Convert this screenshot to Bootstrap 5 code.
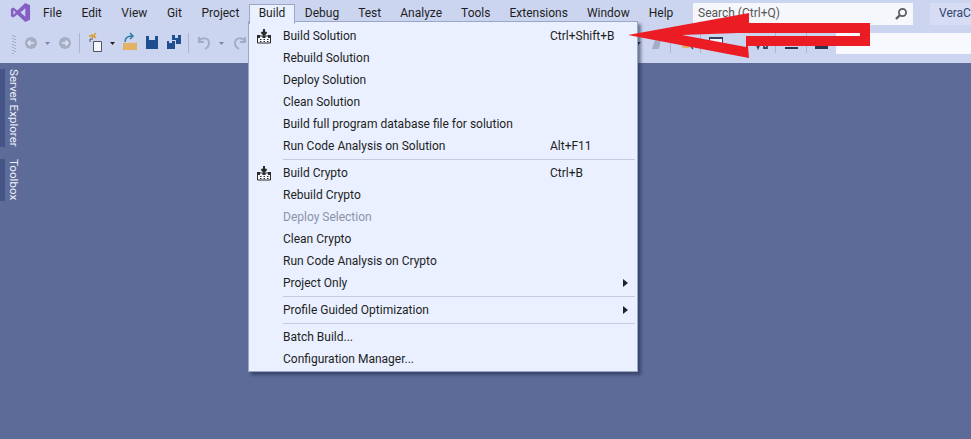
<!DOCTYPE html>
<html lang="en"><head><meta charset="utf-8"><title>Build menu</title>
<link rel="stylesheet" href="https://cdn.jsdelivr.net/npm/bootstrap@5.3.0/dist/css/bootstrap.min.css">
<style>
html,body{height:100%;overflow:hidden}
body{width:971px;height:439px;background:#5d6b99;font-family:Roboto,"Noto Sans",sans-serif;font-size:12px;color:#1e1e1e;position:relative}
.vs-top{height:63px;background:#ccd5f0}
.vs-menubar{height:26px;padding-top:1px}
.vs-logo{width:33.200px;padding-left:10px;padding-top:1px;flex:none}
.vs-mi{padding:0 9.500px;height:21px;line-height:21px;margin-top:2px;white-space:nowrap}
.vs-mi.vs-left{padding:0 9.800px}
.vs-mi.vs-open{background:#eaf0ff;border:1px solid #9ba7c6;border-bottom:0;padding:0 9px 0 8.500px;height:20px;line-height:17px;margin-top:3px;position:relative;z-index:5}
.vs-search{width:220px;height:22px;margin-left:auto;margin-top:2px;background:#f5f7fd;padding:0 5px;color:#555;line-height:21px;flex:none}
.vs-project{width:41px;height:22px;margin-left:17px;margin-top:2px;background:#d5dcf4;padding:0 0 0 9px;line-height:21px;color:#33466e;white-space:nowrap;flex:none}
.vs-project span{display:block;width:32px;overflow:hidden}
.vs-toolbar{height:37px}
.vs-tinput{width:135px;height:21px;background:#f7f9fe;margin-top:7px;margin-left:auto}
.vs-sidebar{width:21px;padding-top:6px}
.vs-tab{writing-mode:vertical-rl;color:#eef1fb;background:linear-gradient(90deg,#465587 0 5px,transparent 5px);padding-left:9px;width:21px;line-height:15px;white-space:nowrap;font-size:11.600px}
.vs-tab1{height:78px;margin-bottom:12px}
.vs-tab2{height:42px}
.vs-menu{position:absolute;left:248px;top:21px;width:390px;height:351px;background:#eaf0ff;border:1px solid #9ba7c6;box-shadow:3px 3px 3px rgba(30,38,70,.55);padding-top:3px;z-index:4}
.vs-row{height:22px;line-height:21px;display:flex;align-items:center;white-space:nowrap}
.vs-ic{width:34px;flex:none;display:flex;justify-content:center;padding-right:5px}
.vs-label{flex:1}
.vs-key{width:73px;flex:none}
.vs-sub{width:14px;flex:none}
.vs-off{color:#8b93a8}
.vs-line{height:1px;background:#c4cbe0;margin:2px 2px 2px 34px}
.vs-arrow{position:absolute;left:625px;top:10px;z-index:8}
</style></head><body>
<div class="vs-top">
 <div class="vs-menubar d-flex">
  <div class="vs-logo"><svg width="21" height="21" viewBox="0 0 22 22"><path d="M16 1l5 2.300v15.400L16 21 7.600 13.200 3.600 16.300 1 15V7l2.600-1.300 4 3.100z" fill="#865fc5"/><path d="M16 6.500 11 11l5 4.500zM3.600 8.500v5L6 11z" fill="#ccd5f0"/></svg></div>
  <div class="vs-mi vs-left">File</div><div class="vs-mi vs-left">Edit</div><div class="vs-mi vs-left">View</div><div class="vs-mi vs-left">Git</div><div class="vs-mi vs-left">Project</div>
  <div class="vs-mi vs-open">Build</div>
  <div class="vs-mi">Debug</div><div class="vs-mi">Test</div><div class="vs-mi">Analyze</div><div class="vs-mi">Tools</div><div class="vs-mi">Extensions</div><div class="vs-mi">Window</div><div class="vs-mi">Help</div>
  <div class="vs-search d-flex justify-content-between"><span>Search (Ctrl+Q)</span><svg class="mt-1" width="14" height="14" viewBox="0 0 14 14"><circle cx="8.500" cy="5.500" r="3.600" fill="none" stroke="#5c5c5c" stroke-width="1.800"/><path d="M6 8 2 12" stroke="#5c5c5c" stroke-width="2.400"/></svg></div>
  <div class="vs-project"><span>VeraCrypt</span></div>
 </div>
 <div class="vs-toolbar d-flex">
  <svg width="835" height="37" viewBox="0 26 835 37">
   <path d="M13 35v19M15 36v18" stroke="#7c86a4" stroke-dasharray="1 2"/>
   <circle cx="31" cy="43" r="6" fill="#a3adc4"/><path d="M34 43h-6M30.500 40.500 28 43l2.500 2.500" stroke="#dfe4f2" fill="none" stroke-width="1.500"/>
   <path d="M45 42h5l-2.500 3z" fill="#7c859c"/>
   <circle cx="65" cy="43" r="6" fill="#a3adc4"/><path d="M62 43h6M65.500 40.500 68 43l-2.500 2.500" stroke="#dfe4f2" fill="none" stroke-width="1.500"/>
   <path d="M79.500 33v20" stroke="#aab4d2"/>
   <path d="M93.500 41.500h8v10h-8z" fill="#f4f6fc" stroke="#4c5566"/><path d="M90 42v-3h3" fill="none" stroke="#4c5566"/>
   <path d="M92 36v-2M92 38l2-2 2 2M89 36h6M96 33l-2 2" stroke="#d99a24" fill="none" stroke-width="1.300"/>
   <path d="M110 42h5l-2.500 3z" fill="#222"/>
   <path d="M123 43h11l3-1v8h-14z" fill="#e3b264"/><path d="M125 42c0-4 3-6 7-6M130 33l3 3-3 3" stroke="#2e7ca0" fill="none" stroke-width="1.500"/>
   <path d="M146 36h12v13h-12z" fill="#1f4f8f"/><path d="M149 36h6v4h-6z" fill="#ccd5f0"/>
   <path d="M167 41h8v8h-8z" fill="#1f4f8f"/><path d="M172 35h9v9h-5v-4h-4z" fill="#1f4f8f"/><path d="M175 35h3v3h-3zM169 41h3v2h-3z" fill="#ccd5f0"/>
   <path d="M188.500 33v20" stroke="#aab4d2"/>
   <path d="M199 37v5h5M199 42c2-5 10-5 10 1 0 3-2 5-4 6" fill="none" stroke="#a3adc4" stroke-width="2"/>
   <path d="M219 42h5l-2.500 3z" fill="#7c859c"/>
   <path d="M245 37v5h-5M245 42c-2-5-10-5-10 1 0 3 2 5 4 6" fill="none" stroke="#a3adc4" stroke-width="2"/>
   <path d="M635 42h6l-3 3z" fill="#222"/>
   <path d="M652 49l3-9 4 1 2-2-2 10z" fill="#a3adc4"/>
   <path d="M670.500 33v20M700.500 33v20M775.500 33v20M806.500 33v20" stroke="#aab4d2"/>
   <path d="M682 44h7v4h-7z" fill="#e3b264"/><path d="M689 44l4 5" stroke="#4c5566" stroke-width="1.500"/>
   <path d="M709.500 37.500h13v9h-13z" fill="#f4f6fc" stroke="#33405e"/><path d="M709 37h14v2h-14z" fill="#33405e"/>
   <path d="M755 41l3 7 3-7M764 41h3v7h-3z" fill="none" stroke="#3a4660" stroke-width="1.800"/>
   <path d="M785 47h13v2h-13zM788 39h2l3 7h-2zM793 40h5v2h-5z" fill="#2a3550"/>
   <path d="M815 49h13v-6h-5v-3h-2v4h-6zM816 39h5v2h-5z" fill="#2a3550"/>
  </svg>
  <div class="vs-tinput"></div>
 </div>
</div>
<div class="vs-sidebar">
 <div class="vs-tab vs-tab1">Server Explorer</div>
 <div class="vs-tab vs-tab2">Toolbox</div>
</div>
<div class="vs-menu">
 <div class="vs-row"><div class="vs-ic"><svg width="16" height="16" viewBox="0 0 16 16"><path d="M8 1v5M5.500 4 8 7l2.500-3" stroke="#2b2b2b" fill="none" stroke-width="2"/><path d="M1.500 8h13v7h-13z" fill="#f6f8ff" stroke="#2b2b2b"/><path d="M1 7h3v3H1zM6.500 8h3v2h-3zM12 7h3v3h-3z" fill="#2b2b2b"/><path d="M4 11.500h1.500M7.500 11.500H9M11 11.500h1.500M4 13.500h1.500M7.500 13.500H9M11 13.500h1.500" stroke="#2b2b2b"/></svg></div><div class="vs-label">Build Solution</div><div class="vs-key">Ctrl+Shift+B</div><div class="vs-sub"></div></div>
 <div class="vs-row"><div class="vs-ic"></div><div class="vs-label">Rebuild Solution</div></div>
 <div class="vs-row"><div class="vs-ic"></div><div class="vs-label">Deploy Solution</div></div>
 <div class="vs-row"><div class="vs-ic"></div><div class="vs-label">Clean Solution</div></div>
 <div class="vs-row"><div class="vs-ic"></div><div class="vs-label">Build full program database file for solution</div></div>
 <div class="vs-row"><div class="vs-ic"></div><div class="vs-label">Run Code Analysis on Solution</div><div class="vs-key">Alt+F11</div><div class="vs-sub"></div></div>
 <div class="vs-line"></div>
 <div class="vs-row"><div class="vs-ic"><svg width="16" height="16" viewBox="0 0 16 16"><path d="M8 1v5M5.500 4 8 7l2.500-3" stroke="#2b2b2b" fill="none" stroke-width="2"/><path d="M1.500 8h13v7h-13z" fill="#f6f8ff" stroke="#2b2b2b"/><path d="M1 7h3v3H1zM6.500 8h3v2h-3zM12 7h3v3h-3z" fill="#2b2b2b"/><path d="M4 11.500h1.500M7.500 11.500H9M11 11.500h1.500M4 13.500h1.500M7.500 13.500H9M11 13.500h1.500" stroke="#2b2b2b"/></svg></div><div class="vs-label">Build Crypto</div><div class="vs-key">Ctrl+B</div><div class="vs-sub"></div></div>
 <div class="vs-row"><div class="vs-ic"></div><div class="vs-label">Rebuild Crypto</div></div>
 <div class="vs-row"><div class="vs-ic"></div><div class="vs-label vs-off">Deploy Selection</div></div>
 <div class="vs-row"><div class="vs-ic"></div><div class="vs-label">Clean Crypto</div></div>
 <div class="vs-row"><div class="vs-ic"></div><div class="vs-label">Run Code Analysis on Crypto</div></div>
 <div class="vs-row"><div class="vs-ic"></div><div class="vs-label">Project Only</div><div class="vs-sub"><svg width="5" height="8" viewBox="0 0 5 8"><path d="M0 0l5 4-5 4z" fill="#1e2233"/></svg></div></div>
 <div class="vs-line"></div>
 <div class="vs-row"><div class="vs-ic"></div><div class="vs-label">Profile Guided Optimization</div><div class="vs-sub"><svg width="5" height="8" viewBox="0 0 5 8"><path d="M0 0l5 4-5 4z" fill="#1e2233"/></svg></div></div>
 <div class="vs-line"></div>
 <div class="vs-row"><div class="vs-ic"></div><div class="vs-label">Batch Build...</div></div>
 <div class="vs-row"><div class="vs-ic"></div><div class="vs-label">Configuration Manager...</div></div>
</div>
<svg class="vs-arrow" width="250" height="50" viewBox="0 0 250 50"><path fill-rule="evenodd" d="M3 25 124 3V13H245V36H123L124 48ZM57 25 113 23H235V26H121V37Z" fill="#ec1c24"/></svg>
<script src="https://cdn.jsdelivr.net/npm/bootstrap@5.3.0/dist/js/bootstrap.bundle.min.js"></script>
</body></html>
